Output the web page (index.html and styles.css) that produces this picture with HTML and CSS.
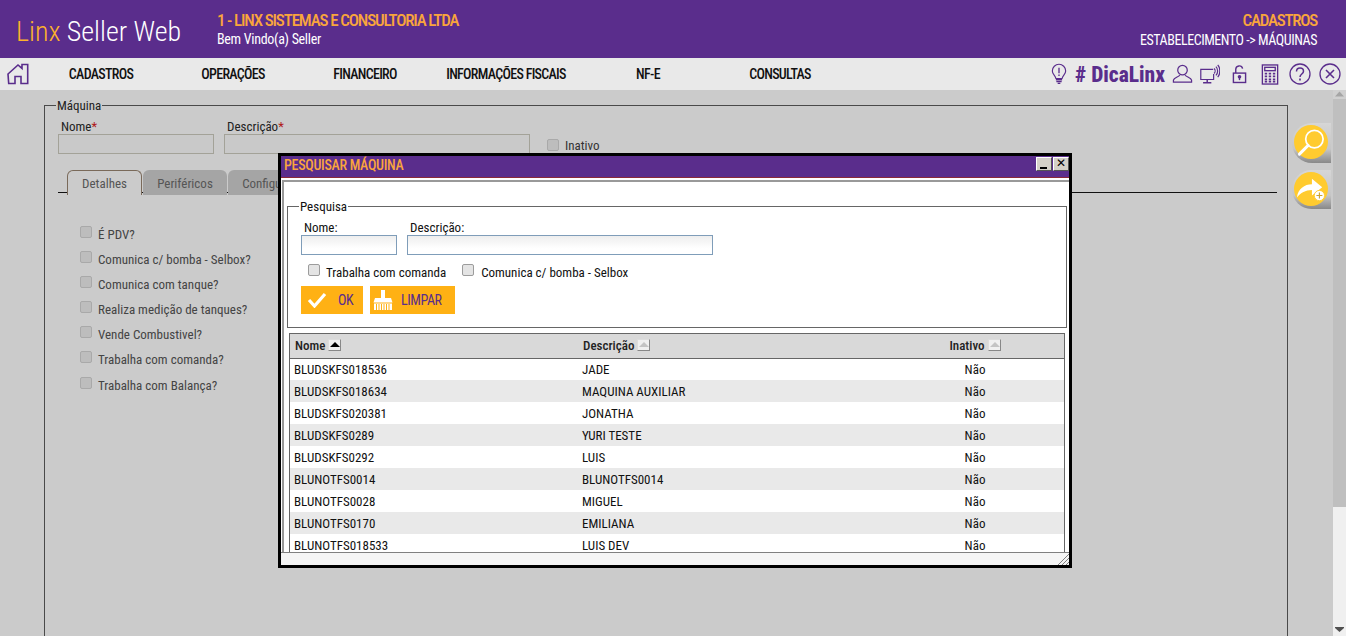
FILE: index.html
```html
<!DOCTYPE html>
<html lang="pt-BR">
<head>
<meta charset="utf-8">
<title>Linx Seller Web</title>
<link rel="stylesheet" href="styles.css">
</head>
<body>
<header class="top">
  <div class="logo"><span class="logo-a">Linx</span> Seller Web</div>
  <div class="company">
    <div class="company-name">1 - LINX SISTEMAS E CONSULTORIA LTDA</div>
    <div class="welcome">Bem Vindo(a) Seller</div>
  </div>
  <div class="crumb">
    <div class="crumb-a">CADASTROS</div>
    <div class="crumb-b">ESTABELECIMENTO -&gt; MÁQUINAS</div>
  </div>
</header>
<nav class="nav">
  <svg class="home" viewBox="0 0 22 22" width="22" height="22" fill="none" stroke="#5a2d8c" stroke-width="1.600"><path d="M1 11 11 2l4 3.400V1.500h5.700V20.500H14v-7H8v7H1.700z"/></svg>
  <div class="menu">
    <span>CADASTROS</span><span>OPERAÇÕES</span><span>FINANCEIRO</span><span>INFORMAÇÕES FISCAIS</span><span>NF-E</span><span>CONSULTAS</span>
  </div>
  <div class="tools">
    <svg viewBox="0 0 18 24" width="16" height="23" fill="none" stroke="#5a2d8c" stroke-width="1.300"><path d="M5.500 16.500C5 13 1.500 12 1.500 8a7.500 7.500 0 0 1 15 0c0 4-3.500 5-4 8.500z"/><path d="M9 4.500v6M9 12v1.600" stroke-width="1.500"/><path d="M5.500 18h7M6 20h6M7.500 22h3" stroke-width="1.600"/></svg>
    <span class="dica"># DicaLinx</span>
    <svg class="t-person" viewBox="0 0 22 20" width="21" height="20" fill="none" stroke="#5a2d8c" stroke-width="1.300"><ellipse cx="11" cy="6" rx="5" ry="5"/><path d="M8 11c0 2-6 2.500-6.500 5.500V18.500h19v-2C20 13.500 14 13 14 11"/></svg>
    <svg class="t-mon" viewBox="0 0 22 24" width="21" height="22" fill="none" stroke="#5a2d8c" stroke-width="1.300"><path d="M15 7H1.500v11h14V12"/><path d="M8.500 18v3M4 21.500h9" stroke-width="1.600"/><path d="M16 6c1.500 1.500 1.500 4 0 5.500M18 4c2.500 2.500 2.500 7 0 9.500M20 2c3 3.500 3 10 0 13.500"/></svg>
    <svg class="t-lock" viewBox="0 0 16 20" width="15" height="19" fill="none" stroke="#5a2d8c" stroke-width="1.500"><rect x="1.500" y="8.500" width="13" height="10"/><path d="M4 8.500V4.500a3.700 3.700 0 0 1 7.300-.8"/><circle cx="8" cy="12.500" r="1.200" fill="#5a2d8c"/><path d="M8 13v3"/></svg>
    <svg class="t-calc" viewBox="0 0 18 22" width="18" height="21" fill="none" stroke="#5a2d8c" stroke-width="1.400"><rect x="1" y="1" width="16" height="20"/><rect x="3.500" y="3.500" width="11" height="3.500"/><path d="M3.500 10h2.500M7.700 10h2.500M12 10h2.500M3.500 13h2.500M7.700 13h2.500M12 13h2.500M3.500 16h2.500M7.700 16h2.500M12 16h2.500M3.500 18.500h2.500M7.700 18.500h2.500M12 18.500h2.500" stroke-width="1.800"/></svg>
    <svg class="t-help" viewBox="0 0 22 22" width="22" height="22" fill="none" stroke="#5a2d8c" stroke-width="1.300"><circle cx="11" cy="11" r="10"/><path d="M7.500 8.500C7.500 6 9 5 11 5s3.500 1.300 3.500 3.200c0 2.800-3.500 2.800-3.500 5.800" stroke-width="1.500"/><path d="M11 15.500v2" stroke-width="1.700"/></svg>
    <svg class="t-close" viewBox="0 0 22 22" width="22" height="22" fill="none" stroke="#5a2d8c" stroke-width="1.300"><circle cx="11" cy="11" r="10"/><path d="m7 7 8 8M15 7l-8 8" stroke-width="1.600"/></svg>
  </div>
</nav>
<div class="body">
  <main class="page">
    <fieldset class="machine">
      <legend>Máquina</legend>
      <div class="fields">
        <label class="field f-name">
          <span class="cap">Nome<b>*</b></span>
          <span class="inp"></span>
        </label>
        <label class="field f-desc">
          <span class="cap">Descrição<b>*</b></span>
          <span class="inp"></span>
        </label>
        <div class="inactive"><i class="chk dim"></i><span>Inativo</span></div>
      </div>
      <div class="tabs">
        <span class="tab on">Detalhes</span><span class="tab t2">Periféricos</span><span class="tab t3">Configurações</span>
      </div>
      <ul class="checks">
        <li><i class="chk dim"></i>É PDV?</li>
        <li><i class="chk dim"></i>Comunica c/ bomba - Selbox?</li>
        <li><i class="chk dim"></i>Comunica com tanque?</li>
        <li><i class="chk dim"></i>Realiza medição de tanques?</li>
        <li><i class="chk dim"></i>Vende Combustivel?</li>
        <li><i class="chk dim"></i>Trabalha com comanda?</li>
        <li><i class="chk dim"></i>Trabalha com Balança?</li>
      </ul>
    </fieldset>
  </main>
  <div class="scroll">
    <svg class="arrow up" viewBox="0 0 13 9" width="13" height="9"><path d="M6.500 1.500 11 6.500H2z" fill="#a5a5a5"/></svg>
    <div class="thumb"></div>
    <svg class="arrow down" viewBox="0 0 13 8" width="13" height="8"><path d="M2 2h9v1L6.500 7 2 3z" fill="#505050"/></svg>
  </div>
  <div class="side s1">
    <span class="disc"><svg viewBox="0 0 30 30" width="29" height="29" fill="none" stroke="#fff"><circle cx="18" cy="11.500" r="9" stroke-width="1.800"/><path d="M11.500 18 2.500 27" stroke-width="3" stroke-linecap="round"/></svg></span>
  </div>
  <div class="side s2">
    <span class="disc"><svg viewBox="0 0 32 30" width="30" height="28"><path d="M1 24c1-9 8-14 16-14V4l11 9-11 9v-6c-7 0-12 3-16 8z" fill="#fff"/><circle cx="25" cy="22" r="5.500" fill="#fff" stroke="#ffcb2f"/><path d="M25 18.800v6.400M21.800 22h6.400" stroke="#c9a233" stroke-width="1.200"/></svg></span>
  </div>
</div>

<section class="modal">
  <div class="m-title">
    <span>PESQUISAR MÁQUINA</span>
    <div class="m-btns"><i class="wbtn min"></i><i class="wbtn close"></i></div>
  </div>
  <div class="m-body">
    <fieldset class="search">
      <legend>Pesquisa</legend>
      <div class="s-fields">
        <label class="s-field sf1"><span>Nome:</span><i class="s-inp"></i></label>
        <label class="s-field sf2"><span>Descrição:</span><i class="s-inp"></i></label>
      </div>
      <div class="s-checks">
        <span class="s-chk"><i class="chk"></i>Trabalha com comanda</span>
        <span class="s-chk"><i class="chk"></i>Comunica c/ bomba - Selbox</span>
      </div>
      <div class="s-btns">
        <button class="btn b-ok"><svg viewBox="0 0 20 16" width="20" height="16"><path d="M2 8l5.500 6L18 2" fill="none" stroke="#fff" stroke-width="3.200"/></svg><span>OK</span></button>
        <button class="btn b-clear"><svg viewBox="0 0 20 22" width="20" height="22" fill="#fff"><path d="M8 1h4v8h6l1.500 4.500H.5L2 9h6z"/><path d="M1 14.500h18V21H1z"/><path d="M3.500 15v6M6 15v6M8.500 15v6M11 15v6M13.500 15v6M16 15v6" stroke="#ffb114"/></svg><span>LIMPAR</span></button>
      </div>
    </fieldset>
    <div class="grid-wrap">
      <table class="grid">
        <thead>
          <tr>
            <th class="c1">Nome <i class="sort act"></i></th>
            <th class="c2">Descrição <i class="sort"></i></th>
            <th class="c3">Inativo <i class="sort"></i></th>
          </tr>
        </thead>
        <tbody>
          <tr><td>BLUDSKFS018536</td><td>JADE</td><td class="ctr">Não</td></tr>
          <tr><td>BLUDSKFS018634</td><td>MAQUINA AUXILIAR</td><td class="ctr">Não</td></tr>
          <tr><td>BLUDSKFS020381</td><td>JONATHA</td><td class="ctr">Não</td></tr>
          <tr><td>BLUDSKFS0289</td><td>YURI TESTE</td><td class="ctr">Não</td></tr>
          <tr><td>BLUDSKFS0292</td><td>LUIS</td><td class="ctr">Não</td></tr>
          <tr><td>BLUNOTFS0014</td><td>BLUNOTFS0014</td><td class="ctr">Não</td></tr>
          <tr><td>BLUNOTFS0028</td><td>MIGUEL</td><td class="ctr">Não</td></tr>
          <tr><td>BLUNOTFS0170</td><td>EMILIANA</td><td class="ctr">Não</td></tr>
          <tr><td>BLUNOTFS018533</td><td>LUIS DEV</td><td class="ctr">Não</td></tr>
        </tbody>
      </table>
    </div>
  </div>
  <div class="m-foot">
    <svg viewBox="0 0 12 12" width="12" height="12" stroke="#808080" fill="none"><path d="M1 12 12 1M5 12l7-7M9 12l3-3"/></svg>
  </div>
</section>
</body>
</html>
```
FILE: styles.css
```css
* { box-sizing: border-box; }
html, body { margin: 0; height: 636px; overflow: hidden; }
body {
  font-family: "Roboto", "Liberation Sans", sans-serif;
  font-stretch: 75%;
  font-size: 13px;
  color: #111;
  background: #cbcbcb;
  display: flex;
  flex-direction: column;
  position: relative;
}

/* header */
.top {
  height: 58px;
  flex: none;
  background: #5a2d8c;
  color: #fff;
  display: flex;
  align-items: flex-start;
}
.logo {
  font-weight: 300;
  font-size: 28px;
  font-stretch: 87%;
  line-height: 36px;
  margin: 14px 0 0 16px;
  width: 201px;
  flex: none;
  white-space: nowrap;
}
.logo-a { color: #fdb22b; }
.company { margin-top: 11px; }
.company-name { color: #f9a53c; font-size: 17px; line-height: 19px; font-weight: 500; letter-spacing: -1.150px; white-space: nowrap; }
.welcome { font-size: 14px; line-height: 18px; letter-spacing: -0.300px; }
.crumb { margin: 11px 29px 0 auto; text-align: right; }
.crumb-a { color: #f9a53c; font-size: 17px; line-height: 19px; font-weight: 500; letter-spacing: -1.250px; }
.crumb-b { font-size: 14px; line-height: 20px; letter-spacing: -0.450px; white-space: nowrap; }

/* nav */
.nav {
  height: 32px;
  flex: none;
  background: #e9e9e9;
  display: flex;
  align-items: center;
  position: relative;
}
.home { margin-left: 7px; width: 22px; flex: none; }
.menu {
  margin-left: 6px;
  display: grid;
  grid-template-columns: 132px 132px 132px 150px 134px 130px;
  font-size: 14px;
  font-weight: 500;
  letter-spacing: -0.700px;
  text-align: center;
  white-space: nowrap;
  color: #111;
}
.tools {
  margin-left: auto;
  margin-right: 5px;
  display: flex;
  align-items: center;
}
.dica {
  font-weight: 800;
  font-size: 21.500px;
  font-stretch: 85%;
  color: #5a2d8c;
  margin-left: 8px;
  width: 90px;
  white-space: nowrap;
}
.t-person { margin-left: 7px; }
.t-mon { margin-left: 6px; }
.t-lock { margin-left: 12px; }
.t-calc { margin-left: 14px; }
.t-help { margin-left: 10px; }
.t-close { margin-left: 8px; }

/* page */
.body { flex: 1; display: flex; min-height: 0; }
.page { flex: 1; padding: 6px 45px 0 44px; overflow: hidden; min-width: 0; }
.machine {
  margin: 0;
  padding: 0 10px 0 13px;
  border: 1px solid #4a4a4a;
  height: 560px;
  color: #444;
}
.machine legend {
  padding: 2px 1px 0;
  margin-left: -2px;
  font-size: 13px;
  line-height: 16px;
  color: #222;
}
.fields { display: flex; margin-top: 5px; }
.field { display: flex; flex-direction: column; margin-right: 10px; }
.f-name { width: 156px; }
.f-desc { width: 306px; }
.cap { height: 15px; font-size: 13px; line-height: 16px; padding-left: 3px; color: #222; }
.cap b { color: #b01818; font-weight: 400; }
.inp { display: block; height: 20px; border: 1px solid #a3a298; background: #c9c9c9; }
.inactive { display: flex; align-items: center; margin: 18px 0 0 7px; color: #333; font-size: 13px; gap: 6px; height: 16px; }

.chk {
  display: inline-block;
  width: 12px;
  height: 12px;
  flex: none;
  border-radius: 2px;
  border: 1px solid #9c9c9c;
  background: #e4e4e4;
}
.chk.dim { background: #bdbdbd; border-color: #a9a9a9; }

.tabs {
  margin-top: 16px;
  height: 25px;
  display: flex;
  padding-left: 9px;
  background: linear-gradient(#111, #111) 0 22px / 100% 1px no-repeat;
}
.tab {
  height: 25px;
  padding-top: 6px;
  font-size: 13px;
  color: #555;
  text-align: center;
  background: #a5a5a5;
  border-radius: 6px 6px 0 0;
  margin-right: 1px;
}
.tab.on {
  width: 75px;
  background: #cbcbcb;
  border: 1px solid #7a6a5a;
  border-bottom: 0;
  padding-top: 5px;
}
.t2 { width: 84px; }
.t3 { width: 102px; }
.checks { list-style: none; margin: 32px 0 0 22px; padding: 0; }
.checks li {
  height: 25.100px;
  font-size: 13px;
  color: #444;
  display: flex;
  align-items: flex-start;
  gap: 6px;
  line-height: 16px;
}
.checks .chk { margin-top: -1px; }

/* scrollbar */
.scroll {
  width: 13px;
  flex: none;
  background: #f0f0f0;
  display: flex;
  flex-direction: column;
}
.arrow { flex: none; }
.up { background: #d0d0d0; }
.thumb { width: 13px; height: 408px; background: #bfbfbf; }
.down { margin-top: auto; margin-bottom: 3px; }

/* floating side buttons */
.side {
  position: absolute;
  left: 1292px;
  width: 39px;
  height: 40px;
  background: linear-gradient(#d6d6d6, #c6c6c6 65%, #888 100%);
  border-radius: 20px 0 0 20px;
  padding: 2px 0 0 2px;
}
.s1 { top: 123px; }
.s2 { top: 170px; height: 39px; }
.disc {
  width: 34px;
  height: 34px;
  border-radius: 50%;
  background: #ffcb2f;
  display: flex;
  align-items: center;
  justify-content: center;
}

/* modal */
.modal {
  position: absolute;
  left: 278px;
  top: 153px;
  width: 794px;
  height: 415px;
  border: 3px solid #000;
  background: #fff;
  display: flex;
  flex-direction: column;
}
.m-title {
  height: 22px;
  flex: none;
  background: #5a2d8c;
  border-bottom: 1px solid #8b2a3a;
  color: #f9a53c;
  font-weight: 500;
  font-size: 14px;
  line-height: 19px;
  letter-spacing: -0.300px;
  padding-left: 3px;
  display: flex;
  justify-content: space-between;
}
.m-btns { display: flex; gap: 1px; margin: 1px 0 0 0; }
.wbtn {
  width: 16px;
  height: 14px;
  background: #d4d0c8;
  border: 1px solid;
  border-color: #fff #555 #555 #fff;
  position: relative;
}
.min::after { content: ""; position: absolute; left: 3px; bottom: 1px; width: 7px; height: 2px; background: #000; }
.close::after {
  content: "✕";
  position: absolute;
  left: 2px;
  top: -3px;
  font: 400 12px/16px "DejaVu Sans", sans-serif;
  color: #000;
}
.m-body {
  flex: 1;
  min-height: 0;
  margin: 2px 0 0 1px;
  border-top: 2px solid #999;
  border-left: 2px solid #999;
  padding: 15px 2px 0 3px;
  display: flex;
  flex-direction: column;
  overflow: hidden;
}
.search {
  margin: 0;
  padding: 0 0 0 13px;
  border: 1px solid #666;
  height: 131px;
  flex: none;
}
.search legend { padding: 2px 1px 0; font-size: 13px; line-height: 16px; margin-left: -2px; }
.s-fields { display: flex; margin-top: 5px; gap: 10px; }
.s-field { display: flex; flex-direction: column; }
.s-field span { font-size: 13px; line-height: 15px; padding-left: 3px; }
.sf1 { width: 96px; }
.sf2 { width: 306px; }
.s-inp { display: block; height: 20px; border: 1px solid #7f9db9; background: linear-gradient(#eee, #fff 70%); }
.s-checks { display: flex; margin-top: 9px; font-size: 13px; color: #111; padding-left: 7px; gap: 16px; line-height: 18px; }
.s-chk { display: flex; gap: 6px; }
.s-chk + .s-chk { gap: 7px; }
.s-btns { display: flex; gap: 7px; margin-top: 4px; }
.btn {
  height: 28px;
  border: 0;
  padding: 0 0 0 6px;
  background: #ffb114;
  color: #5a2d8c;
  font-family: inherit;
  font-stretch: 75%;
  font-size: 14px;
  font-weight: 400;
  letter-spacing: -0.400px;
  display: flex;
  align-items: center;
}
.b-ok { width: 62px; }
.b-ok span { margin-left: 11px; }
.b-clear { width: 85px; padding-left: 3px; }
.b-clear span { margin-left: 8px; }
.grid-wrap {
  margin: 5px 0 0 2px;
  width: 776px;
  flex: 1;
  min-height: 0;
  overflow: hidden;
  border: solid #666;
  border-width: 1px 1px 0 1px;
}
.grid { width: 100%; border-collapse: collapse; table-layout: fixed; font-size: 13px; }
.grid th {
  height: 24px;
  background: #d9d9d9;
  border-bottom: 1px solid #666;
  padding: 0 0 0 5px;
  text-align: left;
  font-weight: 500;
  color: #222;
}
.c1 { width: 288px; }
.c2 { width: 360px; }
.grid .c3 { text-align: center; padding: 0 52px 0 0; }
.sort {
  display: inline-block;
  width: 13px;
  height: 12px;
  vertical-align: -1px;
  border: 1px solid;
  border-color: #ddd #888 #888 #ddd;
  background: #f0f0f0;
  position: relative;
}
.sort::after {
  content: "";
  position: absolute;
  left: 1px;
  top: 2px;
  border: 5px solid transparent;
  border-top: 0;
  border-bottom: 5px solid #c4c4c4;
  width: 0;
}
.sort.act::after { border-bottom-color: #000; }
.grid td { height: 22px; padding: 0 0 0 4px; color: #111; white-space: nowrap; }
.grid tbody tr:nth-child(even) td { background: #e9e9e9; }
.grid .ctr { text-align: center; padding: 0 52px 0 0; }
.m-foot {
  height: 13px;
  flex: none;
  background: #f5f5f5;
  border-top: 1px solid #808080;
  display: flex;
  justify-content: flex-end;
  align-items: flex-end;
}
```
